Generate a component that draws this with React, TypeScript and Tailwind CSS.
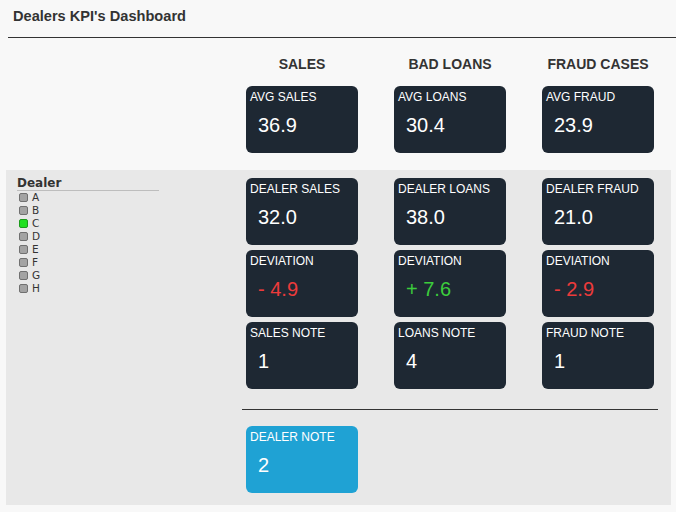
const dealers = ["A", "B", "C", "D", "E", "F", "G", "H"];

type Kpi = { label: string; value: string; tone?: "red" | "green" };

const averages: Kpi[] = [
  { label: "AVG SALES", value: "36.9" },
  { label: "AVG LOANS", value: "30.4" },
  { label: "AVG FRAUD", value: "23.9" },
];

const dealerRows: Kpi[] = [
  { label: "DEALER SALES", value: "32.0" },
  { label: "DEALER LOANS", value: "38.0" },
  { label: "DEALER FRAUD", value: "21.0" },
  { label: "DEVIATION", value: "- 4.9", tone: "red" },
  { label: "DEVIATION", value: "+ 7.6", tone: "green" },
  { label: "DEVIATION", value: "- 2.9", tone: "red" },
  { label: "SALES NOTE", value: "1" },
  { label: "LOANS NOTE", value: "4" },
  { label: "FRAUD NOTE", value: "1" },
];

function Card({ label, value, tone, blue }: Kpi & { blue?: boolean }) {
  const valueColor = tone === "red" ? "text-[#ec3b3b]" : tone === "green" ? "text-[#3ccc3c]" : "text-white";
  return (
    <div className={`h-[67px] w-[112px] rounded-[6px] pl-[4px] pt-[4px] ${blue ? "bg-[#1fa2d4]" : "bg-[#1e2833]"}`}>
      <div className="text-[12px] leading-[14px] text-white">{label}</div>
      <div className={`ml-[8px] mt-[9px] text-[20px] leading-[24px] ${valueColor}`}>{value}</div>
    </div>
  );
}

export default function App() {
  return (
    <div className="h-[512px] overflow-hidden bg-[#f8f8f8] font-['Liberation_Sans',Arial,sans-serif] text-[#333]">
      <div className="h-[37px] px-[13px] pt-[8px] text-[14.6px] font-bold leading-[17px]">Dealers KPI's Dashboard</div>
      <div className="ml-[8px] border-t border-[#333]" />

      <div className="pl-[246px]">
        <div className="grid h-[48px] grid-cols-[112px_112px_112px] gap-x-[36px] pt-[18px] text-center text-[14px] font-bold leading-[16px]">
          <div>SALES</div>
          <div>BAD LOANS</div>
          <div className="whitespace-nowrap">FRAUD CASES</div>
        </div>
        <div className="grid grid-cols-[112px_112px_112px] gap-x-[36px]">
          {averages.map((k) => (
            <Card key={k.label} {...k} />
          ))}
        </div>
      </div>

      <div className="ml-[6px] mt-[17px] flex h-[335px] w-[665px] bg-[#e8e8e8]">
        <div className="w-[240px] pl-[11px] pt-[6px] font-['DejaVu_Sans',Verdana,sans-serif]">
          <div className="w-[142px] border-b border-[#bdbdbd] text-[12px] font-bold leading-[14px] text-[#333]">Dealer</div>
          <ul className="pl-[2px] text-[10.5px] leading-[13px] text-[#333]">
            {dealers.map((d) => (
              <li key={d} className="flex items-center gap-[4px]">
                <span
                  className={`inline-block h-[9px] w-[9px] rounded-[2px] border ${
                    d === "C" ? "border-[#1c9a1c] bg-[#1fe01f]" : "border-[#707070] bg-[#a3a3a3]"
                  }`}
                />
                {d}
              </li>
            ))}
          </ul>
        </div>

        <div className="pt-[8px]">
          <div className="grid grid-cols-[112px_112px_112px] gap-x-[36px] gap-y-[5px]">
            {dealerRows.map((k, i) => (
              <Card key={i} {...k} />
            ))}
          </div>
          <div className="-ml-[4px] mt-[20px] w-[416px] border-t border-[#333]" />
          <div className="mt-[16px]">
            <Card label="DEALER NOTE" value="2" blue />
          </div>
        </div>
      </div>
    </div>
  );
}
